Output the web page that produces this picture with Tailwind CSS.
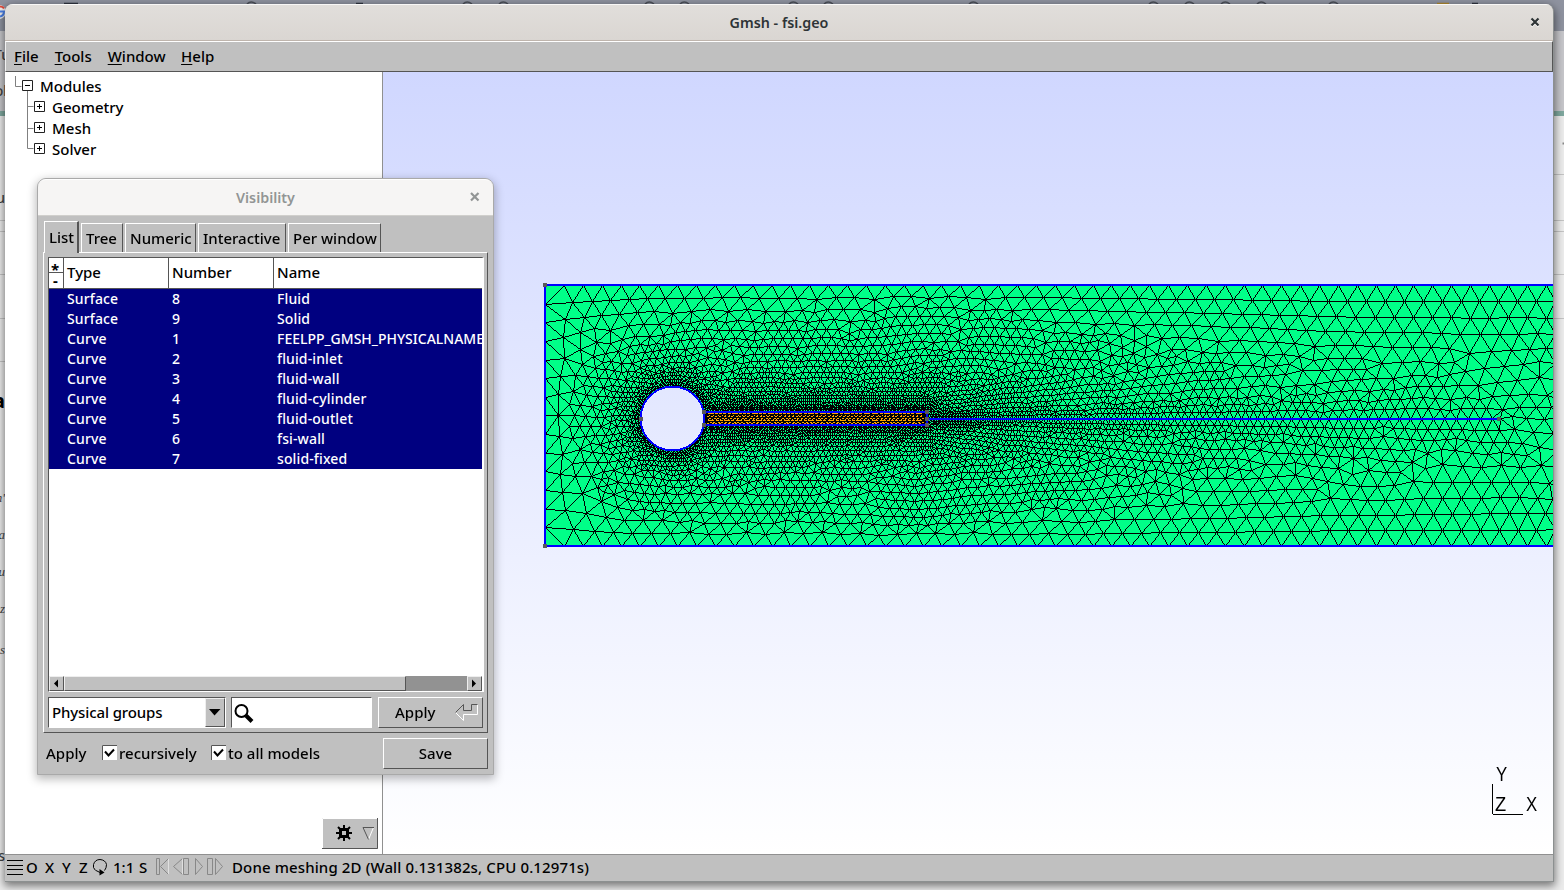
<!DOCTYPE html>
<html lang="en">
<head>
<meta charset="utf-8">
<title>Gmsh - fsi.geo</title>
<script src="https://cdn.jsdelivr.net/npm/@tailwindcss/browser@4"></script>
</head>
<body class="relative w-[1564px] h-[890px] overflow-hidden bg-[#e6e6e6] font-['Noto_Sans',sans-serif] font-medium text-[15px] text-black">

<!-- browser page behind the windows -->
<div class="absolute inset-0 flex flex-col overflow-hidden">
  <div class="h-[31px] shrink-0 bg-[#8f93a0]"></div>
  <div class="h-[80px] shrink-0 bg-[#c6c6ca]"></div>
  <div class="h-[5px] shrink-0 bg-[#7fa89f]"></div>
  <div class="flex-1 bg-[#ececec]"></div>
</div>
<svg class="absolute left-0 top-0" width="1564" height="890" fill="none">
  <g stroke="#c4c4c4"><path d="M0 220.5H5M0 231.5H5M0 274.5H5M0 318.5H5M0 361.5H5M1554 174.5h10M1554 220.5h10M1554 231.5h10M1554 274.5h10M1554 318.5h10"/></g>
  <g stroke="#4c5059" stroke-width="1.5"><path d="M247 4q4-4 9 0M463 4q4-4 9 0M499 4q4-4 9 0M645 4q4-4 9 0M680 4q4-4 9 0M789 4q4-4 9 0M824 4q4-4 9 0M969 4q4-4 9 0M1149 4q4-4 9 0M1185 4q4-4 9 0M1221 4q4-4 9 0M1257 4q4-4 9 0M1329 4q4-4 9 0"/></g>
  <path d="M64 3.500h14M356 3.500h7M1472 3.500h6" stroke="#2f3440" stroke-width="1.500"/>
  <path d="M1437 3.500h12" stroke="#b08a30" stroke-width="1.500"/>
  <circle cx="-1" cy="12" r="7" fill="#eee"/>
  <path d="M0 6.500q3 0 4 2" stroke="#e0493c" stroke-width="2"/><path d="M0 11.500h4q0 4-4 5" stroke="#4a80e8" stroke-width="2"/>
  <path d="M1562.500 143.500h2" stroke="#888" stroke-width="2"/>
</svg>
<div class="absolute left-0 top-0 w-[5px] h-[890px] overflow-hidden text-[#444]">
  <span class="absolute right-[-5px] top-[44px] text-[14px]">Tu</span>
  <span class="absolute right-[-2px] top-[80px] text-[14px]">ol</span>
  <span class="absolute right-0 top-[187px] text-[14px]">u</span>
  <span class="absolute right-0 top-[386px] text-[20px] font-bold text-black">a</span>
  <span class="absolute right-0 top-[488px] text-[13px] italic font-['Liberation_Serif',serif]">n'</span>
  <span class="absolute right-0 top-[525px] text-[13px] italic font-['Liberation_Serif',serif]">a</span>
  <span class="absolute right-0 top-[562px] text-[13px] italic font-['Liberation_Serif',serif]">u</span>
  <span class="absolute right-0 top-[599px] text-[13px] italic font-['Liberation_Serif',serif]">iz</span>
  <span class="absolute right-0 top-[640px] text-[13px] italic font-['Liberation_Serif',serif]">s</span>
  <span class="absolute right-0 top-[845px] text-[14px]">s</span>
</div>

<!-- main window -->
<div class="absolute left-[5px] top-[4px] w-[1549px] h-[878px] rounded-t-[8px] flex flex-col overflow-hidden border-r border-b border-[#8c9090] bg-[#c0c0c0] shadow-[0_3px_9px_1px_rgba(0,0,0,0.5)]">
  <div class="h-[37px] shrink-0 flex items-center bg-gradient-to-b from-[#e1dedb] to-[#dad6d2] border-t border-[#f8f7f6] border-b border-b-[#bfb5ad] relative">
    <div class="w-full text-center text-[14.300px] font-semibold text-[#2e3436] leading-[35px]">Gmsh - fsi.geo</div>
    <svg class="absolute left-[1525px] top-[12px]" width="10" height="11"><path d="M1.500 2.500l7 7M8.500 2.500l-7 7" stroke="#fff" stroke-width="2"/><path d="M1.500 1.500l7 7M8.500 1.500l-7 7" stroke="#2e3436" stroke-width="2.200"/></svg>
  </div>
  <div class="h-[31px] shrink-0 border-t border-l border-t-white border-l-[#f0f0f0] border-b border-b-[#555] border-r border-r-[#555] flex items-center pl-[8px] gap-[16px] leading-[29px]">
    <span><u class="underline-offset-2">F</u>ile</span><span><u class="underline-offset-2">T</u>ools</span><span><u class="underline-offset-2">W</u>indow</span><span class="-ml-[0.500px]"><u class="underline-offset-2">H</u>elp</span>
  </div>
  <div class="h-[782px] shrink-0 flex">
    <!-- module tree -->
    <div class="w-[378px] shrink-0 bg-white border-r border-[#909090] relative">
      <svg class="absolute left-0 top-0" width="50" height="90" fill="none">
        <path d="M10.500 4v10.500h6M22.500 19v57.500h6M22.500 34.500h6M22.500 56.500h6" stroke="#808080"/>
        <g stroke="#222" fill="#fff"><path d="M17.500 8.500h10v10h-10zM29.500 29.500h10v10h-10zM29.500 50.500h10v10h-10zM29.500 71.500h10v10h-10z"/><path d="M20 13.500h5M32 34.500h5M34.500 32v5M32 55.500h5M34.500 53v5M32 76.500h5M34.500 74v5" stroke="#000"/></g>
      </svg>
      <div class="pt-[4px] pl-[47px] leading-[21px]">
        <div class="-ml-[12px]">Modules</div><div>Geometry</div><div>Mesh</div><div>Solver</div>
      </div>
      <svg class="absolute left-[317px] top-[746px]" width="56" height="31" fill="none">
        <rect width="56" height="31" fill="#c0c0c0"/><path d="M.5 31V.5H56" stroke="#fff"/><path d="M0 30.500h55.500V0" stroke="#555"/>
        <g transform="translate(22 15)" stroke="#000"><rect x="-3.500" y="-3.500" width="7" height="7" stroke-width="3"/><path d="M0-8v4M0 4v4M-8 0h4M4 0h4M-6-6l3 3M6-6l-3 3M-6 6l3-3M6 6l-3-3" stroke-width="2"/></g>
        <path d="M51.500 9.500l-5 12" stroke="#fff"/><path d="M46.500 21.500l-5.500-12h11" stroke="#555"/>
      </svg>
    </div>
    <!-- graphic window -->
    <div class="w-[1170px] h-[782px] relative bg-gradient-to-b from-[#d0d7ff] to-white">
      <canvas id="scene" class="block" width="1170" height="782"></canvas>
      <svg class="absolute left-[1100px] top-[690px]" width="60" height="60" fill="none" stroke="#000" shape-rendering="crispEdges">
        <path d="M9.500 22v30M10 52.500h30"/>
      </svg>
      <div class="absolute left-[1113px] top-[691px] font-['Liberation_Sans',sans-serif] font-normal text-[21px] leading-[22px]"><span class="inline-block scale-x-[0.8] origin-left">Y</span></div>
      <div class="absolute left-[1112px] top-[721px] font-['Liberation_Sans',sans-serif] font-normal text-[21px] leading-[22px] flex"><span class="w-[31px]"><span class="inline-block scale-x-[0.87] origin-left">Z</span></span><span class="inline-block scale-x-[0.8] origin-left">X</span></div>
    </div>
  </div>
  <!-- status bar -->
  <div class="flex-1 border-t border-[#909090] flex items-start relative leading-[24px] whitespace-pre">
    <svg class="shrink-0" width="21" height="26" stroke="#000"><path d="M2 5.500h16M2 10.500h16M2 14.500h16M2 19.500h16"/></svg>
    <span class="w-[19px]">O</span><span class="w-[17px]">X</span><span class="w-[17px]">Y</span><span class="w-[13px]">Z</span>
    <svg class="shrink-0" width="21" height="26" fill="none" stroke="#000"><path d="M3.500 15.500Q.5 12.500 1.500 9.500Q3 4.500 8 4.500Q13.500 5 14.500 9.500Q14.500 13 12.500 15.500M4 15.500l4 2" /><path d="M7.500 14l5 3.500-5 3z" fill="#000" stroke="none"/></svg>
    <span class="w-[26px]">1:1</span><span class="w-[17px]">S</span>
    <svg class="shrink-0" width="76" height="26" fill="none" stroke="#888"><path d="M.5 3.500h3v16h-3zM12.500 3.500v16l-8-8zM26.500 3.500v16l-9-8zM27.500 3.500h5v16h-5zM39.500 3.500v16l7-8zM51.500 3.500h5v16h-5zM59.500 3.500v16l7-8z"/><path d="M12.500 3.500v16M26.500 3.500v16" stroke="#e0e0e0"/></svg>
    <span class="text-[15px] tracking-[0.125px]">Done meshing 2D (Wall 0.131382s, CPU 0.12971s)</span>
  </div>
</div>

<!-- visibility dialog -->
<div class="absolute left-[37px] top-[178px] w-[457px] h-[597px] border border-[#a9a9a9] rounded-t-[9px] bg-[#c0c0c0] flex flex-col shadow-[0_3px_10px_1px_rgba(0,0,0,0.28)]">
  <div class="h-[37px] shrink-0 rounded-t-[8px] bg-[#f6f5f4] border-b border-[#d0cfcc] border-t border-t-white relative text-center leading-[36px] font-semibold text-[14.300px] text-[#929595]">Visibility
    <svg class="absolute left-[432px] top-[12px]" width="10" height="10"><path d="M1 1l7.500 7.500M8.500 1l-7.500 7.500" stroke="#929595" stroke-width="2.200"/></svg>
  </div>
  <div class="h-[36px] shrink-0 flex items-end pl-[6px] relative z-10 gap-[2px]">
    <div class="w-[35px] h-[32px] -mb-px bg-[#c0c0c0] border-t border-l border-white border-r-2 border-r-[#555] leading-[31px] pl-[4px]">List</div>
    <div class="w-[42px] h-[29px] border-t border-l border-white border-r border-r-[#555] pl-[4px] leading-[28px]">Tree</div>
    <div class="w-[71px] h-[29px] border-t border-l border-white border-r border-r-[#555] pl-[4px] leading-[28px]">Numeric</div>
    <div class="w-[88px] h-[29px] border-t border-l border-white border-r border-r-[#555] pl-[4px] leading-[28px] whitespace-nowrap">Interactive</div>
    <div class="w-[93px] h-[29px] border-t border-l border-white border-r border-r-[#555] pl-[4px] leading-[28px] whitespace-nowrap">Per window</div>
  </div>
  <div class="ml-[5px] w-[445px] h-[481px] shrink-0 border-t border-l border-white border-r border-b border-r-[#555] border-b-[#555] pt-[4px] pl-[4px]">
    <div class="w-[436px] h-[435px] border-t border-l border-[#555] border-r-2 border-b border-r-white border-b-white bg-white flex flex-col overflow-hidden">
      <div class="h-[31px] shrink-0 flex border-b border-[#555] leading-[29px]">
        <div class="w-[15px] shrink-0 flex flex-col border-r border-[#555] font-bold pl-[2px]">
          <div class="h-[15px] leading-[23px] border-b border-[#555] -ml-[2px] pl-[2px]">*</div><div class="leading-[15px] pl-[2px]">-</div>
        </div>
        <div class="w-[105px] shrink-0 border-r border-[#555] pl-[3px]">Type</div>
        <div class="w-[105px] shrink-0 border-r border-[#555] pl-[3px]">Number</div>
        <div class="pl-[3px]">Name</div>
      </div>
      <div class="bg-[#000080] text-white leading-[20px] text-[14px] tracking-[0.13px] whitespace-nowrap">
        <div class="flex h-[20px] pl-[18px]"><span class="w-[105px] shrink-0">Surface</span><span class="w-[105px] shrink-0">8</span><span>Fluid</span></div>
        <div class="flex h-[20px] pl-[18px]"><span class="w-[105px] shrink-0">Surface</span><span class="w-[105px] shrink-0">9</span><span>Solid</span></div>
        <div class="flex h-[20px] pl-[18px]"><span class="w-[105px] shrink-0">Curve</span><span class="w-[105px] shrink-0">1</span><span class="tracking-normal">FEELPP_GMSH_PHYSICALNAMES</span></div>
        <div class="flex h-[20px] pl-[18px]"><span class="w-[105px] shrink-0">Curve</span><span class="w-[105px] shrink-0">2</span><span>fluid-inlet</span></div>
        <div class="flex h-[20px] pl-[18px]"><span class="w-[105px] shrink-0">Curve</span><span class="w-[105px] shrink-0">3</span><span>fluid-wall</span></div>
        <div class="flex h-[20px] pl-[18px]"><span class="w-[105px] shrink-0">Curve</span><span class="w-[105px] shrink-0">4</span><span>fluid-cylinder</span></div>
        <div class="flex h-[20px] pl-[18px]"><span class="w-[105px] shrink-0">Curve</span><span class="w-[105px] shrink-0">5</span><span>fluid-outlet</span></div>
        <div class="flex h-[20px] pl-[18px]"><span class="w-[105px] shrink-0">Curve</span><span class="w-[105px] shrink-0">6</span><span>fsi-wall</span></div>
        <div class="flex h-[20px] pl-[18px]"><span class="w-[105px] shrink-0">Curve</span><span class="w-[105px] shrink-0">7</span><span>solid-fixed</span></div>
      </div>
      <div class="flex-1"></div>
      <div class="h-[15px] shrink-0 flex bg-[#929292]">
        <div class="w-[15px] border-t border-l border-[#eee] border-r border-b border-r-[#555] border-b-[#555] bg-[#c0c0c0]"><svg width="13" height="13"><path d="M8 2.500v8l-4-4z"/></svg></div>
        <div class="w-[342px] border-t border-l border-[#eee] border-r border-b border-r-[#555] border-b-[#555] bg-[#c0c0c0]"></div>
        <div class="flex-1"></div>
        <div class="w-[15px] border-t border-l border-[#eee] border-r border-b border-r-[#555] border-b-[#555] bg-[#c0c0c0]"><svg width="13" height="13"><path d="M4 2.500v8l4-4z"/></svg></div>
      </div>
    </div>
    <div class="flex pt-[5px] h-[36px]">
      <div class="w-[178px] border-t border-l border-[#555] border-r border-b border-r-white border-b-white bg-white flex leading-[29px] pl-[3px]">
        <span class="flex-1 tracking-[-0.120px]">Physical groups</span>
        <div class="w-[20px] bg-[#c0c0c0] border-t border-l border-[#eee] border-r border-b border-r-[#555] border-b-[#555]"><svg width="18" height="27"><path d="M3 10h11.500l-6 6.500z"/></svg></div>
      </div>
      <div class="ml-[5px] w-[141px] border-t border-l border-[#555] border-r border-b border-r-white border-b-white bg-white"><svg width="26" height="29" fill="none" stroke="#000"><circle cx="9.500" cy="13" r="6" stroke-width="2"/><path d="M14 17.500l6 6" stroke-width="4"/></svg></div>
      <div class="ml-[6px] w-[105px] border-t border-l border-white border-r border-b border-r-[#555] border-b-[#555] flex leading-[29px] pl-[16px]">Apply<svg class="ml-[19px]" width="26" height="28" fill="none"><path d="M23.500 6.500v10h-14v6l-8-8" stroke="#fff"/><path d="M1.500 14.500l8-8v6h8v-6h6" stroke="#555"/></svg></div>
    </div>
  </div>
  <div class="flex items-start pl-[8px] pt-[5px] leading-[31px]">
    <span class="w-[56px] shrink-0">Apply</span>
    <svg class="mt-[7px] mr-[2px] shrink-0" width="15" height="16" fill="none"><rect width="15" height="15" fill="#fff"/><path d="M.5 15V.5H15" stroke="#555"/><path d="M3 6.500l3.500 4 5.500-6" stroke="#000" stroke-width="2"/></svg>
    <span class="w-[92px] shrink-0">recursively</span>
    <svg class="mt-[7px] mr-[2px] shrink-0" width="15" height="16" fill="none"><rect width="15" height="15" fill="#fff"/><path d="M.5 15V.5H15" stroke="#555"/><path d="M3 6.500l3.500 4 5.500-6" stroke="#000" stroke-width="2"/></svg>
    <span class="w-[155px] shrink-0">to all models</span>
    <div class="w-[105px] h-[31px] shrink-0 border-t border-l border-white border-r border-b border-r-[#555] border-b-[#555] text-center leading-[29px]">Save</div>
  </div>
</div>

<script>
// Triangular mesh of a channel with a cylinder and an elastic beam behind it.
const cv = document.getElementById('scene'), ctx = cv.getContext('2d');
const OX = 383, OY = 72;
const X0 = 545, X1 = 1640, Y0 = 285, Y1 = 546, CX = 672.5, CY = 418.5, R = 32;
let seed = 7; const rnd = () => (seed = (seed * 16807) % 2147483647) / 2147483647;
function size(x, y) {
  const dc = Math.abs(Math.hypot(x - CX, y - CY) - R);
  const bx = Math.max(704 - x, 0, x - 926), by = Math.max(411 - y, y - 425, 0);
  const db = Math.hypot(bx, by);
  const lx = Math.min(Math.max(x, 926), 1500);
  const dl = Math.hypot(x - lx, y - 418.5);
  return Math.min(18.8, 2.5 + 0.15 * dc, 2.5 + 0.1 * db, 2.6 + (lx - 926) * 0.0175 + 0.078 * dl);
}
const pts = [], cell = 8, grid = new Map();
function near(x, y, r) {
  const a = Math.floor((x - r) / cell), b = Math.floor((x + r) / cell), c = Math.floor((y - r) / cell), d = Math.floor((y + r) / cell);
  for (let i = a; i <= b; i++) for (let j = c; j <= d; j++) {
    const g = grid.get(i * 1000 + j); if (!g) continue;
    for (const p of g) if (Math.hypot(p.x - x, p.y - y) < r) return true;
  }
  return false;
}
function add(x, y, fixed) {
  const p = { x, y, fixed }; pts.push(p);
  const k = Math.floor(x / cell) * 1000 + Math.floor(y / cell);
  if (!grid.has(k)) grid.set(k, []); grid.get(k).push(p);
}
function edge(xa, ya, xb, yb, h) {
  const n = Math.round(Math.hypot(xb - xa, yb - ya) / h);
  for (let i = 0; i < n; i++) add(xa + (xb - xa) * i / n, ya + (yb - ya) * i / n, true);
}
edge(X0, Y0, X1, Y0, 18.8); edge(X1, Y0, X1, Y1, 18.8); edge(X1, Y1, X0, Y1, 18.8); edge(X0, Y1, X0, Y0, 18.8);
for (let i = 0; i < 78; i++) { const a = i / 78 * 2 * Math.PI; add(CX + R * Math.cos(a), CY + R * Math.sin(a), true); }
edge(706, 411.5, 927, 411.5, 2.5); edge(706, 425, 927, 425, 2.5); edge(927, 411.5, 927, 425, 2.5);
for (let x = 930; x < 1500; x += size(x, CY)) add(x, CY, true);
add(1500, CY, true);
const inside = (x, y) => Math.hypot(x - CX, y - CY) < R - 0.5 || (x > 700 && x < 926.5 && y > 412 && y < 424.5);
for (let q = 0; q < pts.length && q < 20000; q++) {
  const p = pts[q];
  const turn = p.fixed ? 0 : (rnd() - 0.5) * 0.25;
  for (let k = 0; k < 6; k++) {
    const a = k * Math.PI / 3 + turn;
    let h = size(p.x, p.y); h = (h + size(p.x + h * Math.cos(a), p.y + h * Math.sin(a))) / 2;
    const x = p.x + h * Math.cos(a), y = p.y + h * Math.sin(a);
    if (x < X0 + h * 0.6 || x > X1 - h * 0.6 || y < Y0 + h * 0.6 || y > Y1 - h * 0.6 || inside(x, y)) continue;
    if (Math.hypot(x - CX, y - CY) < R + h * 0.6) continue;
    if (!near(x, y, h * 0.78)) add(x, y, false);
  }
}
function delaunay(P) {
  const n = P.length, idx = P.map((_, i) => i).sort((a, b) => P[a].x - P[b].x);
  const Q = P.concat([{ x: -9000, y: -9000 }, { x: 1000, y: 20000 }, { x: 12000, y: -9000 }]);
  const circ = (i, j, k) => {
    const a = Q[i], b = Q[j], c = Q[k], bx = b.x - a.x, by = b.y - a.y, ex = c.x - a.x, ey = c.y - a.y;
    const d = 2 * (bx * ey - by * ex), B = bx * bx + by * by, E = ex * ex + ey * ey;
    const ux = (ey * B - by * E) / d, uy = (bx * E - ex * B) / d;
    return { i, j, k, x: a.x + ux, y: a.y + uy, r: ux * ux + uy * uy };
  };
  let open = [circ(n, n + 1, n + 2)]; const closed = [];
  for (const c of idx) {
    const edges = new Map(), keep = [], p = Q[c];
    for (const t of open) {
      const dx = p.x - t.x, dy = p.y - t.y;
      if (dx > 0 && dx * dx > t.r) { closed.push(t); continue; }
      if (dx * dx + dy * dy - t.r > 1e-7) { keep.push(t); continue; }
      for (const [u, v] of [[t.i, t.j], [t.j, t.k], [t.k, t.i]]) {
        const key = Math.min(u, v) * 100000 + Math.max(u, v);
        if (edges.has(key)) edges.set(key, null); else edges.set(key, [u, v]);
      }
    }
    for (const e of edges.values()) if (e) { const t = circ(e[0], e[1], c); if (isFinite(t.r)) keep.push(t); }
    open = keep;
  }
  return closed.concat(open).filter(t => t.i < n && t.j < n && t.k < n);
}
for (const p of pts) { p.x += (rnd() - 0.5) * 1e-3; p.y += (rnd() - 0.5) * 1e-3; }
let tris = delaunay(pts);
for (let it = 0; it < 3; it++) {
  const s = pts.map(() => [0, 0, 0]);
  for (const t of tris) for (const [u, v] of [[t.i, t.j], [t.j, t.k], [t.k, t.i]]) {
    s[u][0] += pts[v].x; s[u][1] += pts[v].y; s[u][2]++; s[v][0] += pts[u].x; s[v][1] += pts[u].y; s[v][2]++;
  }
  pts.forEach((p, i) => { if (!p.fixed && s[i][2]) { p.x = s[i][0] / s[i][2]; p.y = s[i][1] / s[i][2]; } });
  tris = delaunay(pts);
}
function rect(c, x, y, w, h) { ctx.fillStyle = c; ctx.fillRect(x - OX, y - OY, w, h); }
rect('#00ff88', 545, 285, 1008, 261);
ctx.fillStyle = '#000';
function line(x0, y0, x1, y1) {
  x0 = Math.round(x0); y0 = Math.round(y0); x1 = Math.round(x1); y1 = Math.round(y1);
  const n = Math.max(Math.abs(x1 - x0), Math.abs(y1 - y0)) || 1;
  for (let i = 0; i <= n; i++) ctx.fillRect(Math.round(x0 + (x1 - x0) * i / n) - OX, Math.round(y0 + (y1 - y0) * i / n) - OY, 1, 1);
}
const seen = new Set();
for (const t of tris) for (const [u, v] of [[t.i, t.j], [t.j, t.k], [t.k, t.i]]) {
  const key = Math.min(u, v) * 100000 + Math.max(u, v);
  if (seen.has(key)) continue; seen.add(key);
  line(pts[u].x, pts[u].y, pts[v].x, pts[v].y);
}
// solid beam
rect('#000', 704, 411, 223, 14);
ctx.fillStyle = '#ffa500';
[[413, 0, 3], [415, 2, 1], [416, 0, 2], [418, 2, 2], [419, 1, 1], [420, 0, 3], [422, 2, 2], [423, 0, 2]].forEach(([y, o, w]) => {
  for (let x = 707 + o; x < 923; x += 4) ctx.fillRect(x + (rnd() < 0.3 ? 1 : 0) - OX, y - OY, w, 1);
});
// geometry curves
for (let y = -34; y <= 34; y++) for (let x = -34; x <= 34; x++) {
  const px = 672 + x, py = 418 + y, d = Math.hypot(px + .5 - CX, py + .5 - CY);
  if (d < 31) ctx.clearRect(px - OX, py - OY, 1, 1);
  else if (d < 32.8) rect('#0000ff', px, py, 1, 1);
}
rect('#0000ff', 544, 284, 1009, 2); rect('#0000ff', 544, 545, 1009, 2); rect('#0000ff', 544, 284, 2, 262);
rect('#0000ff', 704, 411, 223, 2); rect('#0000ff', 704, 424, 223, 2); rect('#0000ff', 926, 411, 2, 14);
rect('#0000ff', 928, 418, 572, 2);
for (const [x, y] of [[543, 283], [543, 544], [639, 417], [702, 410], [702, 423], [925, 410], [925, 417], [925, 423], [1497, 417]]) rect('#595959', x, y, 4, 4);
</script>
</body>
</html>
